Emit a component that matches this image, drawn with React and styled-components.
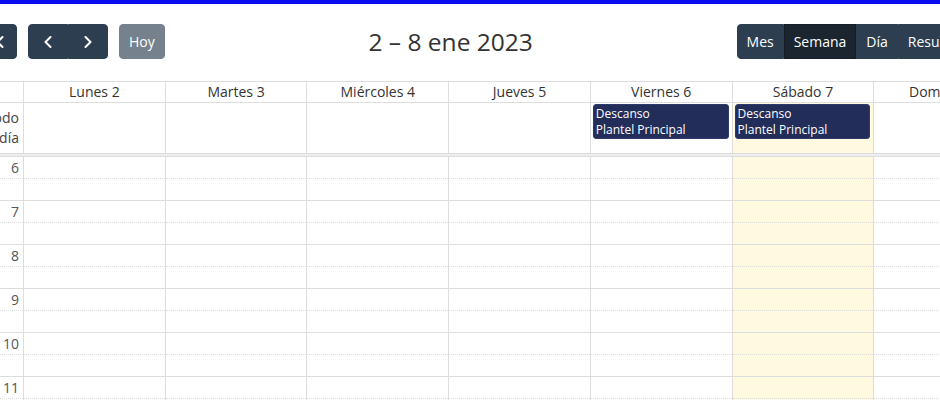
import React from "react";
import styled, { createGlobalStyle } from "styled-components";

const Global = createGlobalStyle`
  html, body { margin: 0; padding: 0; overflow: hidden; background: #fff; }
  body { font-family: "Open Sans", "Noto Sans", sans-serif; font-size: 14px; color: #333; }
`;

const TopBar = styled.div`
  height: 4px;
  background: #0a0af0;
`;

const Calendar = styled.div`
  width: 1038px;
  margin-left: -23px;
  padding-top: 20px;
`;

const Toolbar = styled.div`
  display: flex;
  justify-content: space-between;
  align-items: center;
  padding-right: 36px;
  margin-bottom: 22px;
`;

const Chunk = styled.div`
  display: flex;
  align-items: center;
  gap: 11px;
`;

const Group = styled.div`
  display: flex;
  & > button { border-radius: 0; }
  & > button:first-child { border-radius: 4px 0 0 4px; }
  & > button:last-child { border-radius: 0 4px 4px 0; }
`;

const Button = styled.button`
  font-family: inherit;
  font-size: 14px;
  line-height: 21px;
  height: 35px;
  padding: 6px 9px;
  border: 1px solid ${(p) => (p.$active ? "#151e27" : "#2c3e50")};
  background: ${(p) => (p.$active ? "#1a252f" : "#2c3e50")};
  color: #fff;
  border-radius: 4px;
  opacity: ${(p) => (p.disabled ? 0.65 : 1)};
  display: flex;
  align-items: center;
  justify-content: center;
  ${(p) => (p.$icon ? "width: 40px; padding: 0;" : "")}
  cursor: pointer;
`;

const Title = styled.h2`
  margin: 0;
  font-size: 24.5px;
  font-weight: 400;
  color: #333;
  line-height: 1.3;
`;

const Grid = styled.div`
  display: grid;
  grid-template-columns: 46px repeat(7, 1fr);
  border-top: 1px solid #ddd;
`;

const HeadCell = styled.div`
  height: 20px;
  line-height: 20px;
  text-align: center;
  border-left: ${(p) => (p.$first ? "none" : "1px solid #ddd")};
  border-bottom: 1px solid #ddd;
  color: #333;
  white-space: nowrap;
  overflow: hidden;
`;

const AllDayAxis = styled.div`
  min-height: 50px;
  display: flex;
  align-items: center;
  justify-content: flex-end;
  text-align: right;
  padding: 0 4px;
  line-height: 20px;
  color: #444;
  white-space: nowrap;
`;

const AllDayCell = styled.div`
  min-height: 50px;
  padding-top: 1px;
  border-left: 1px solid #ddd;
  background: ${(p) => (p.$today ? "rgba(255, 220, 40, 0.15)" : "transparent")};
  box-sizing: border-box;
`;

const Event = styled.div`
  margin: 0 3px 0 2px;
  background: #222d5a;
  border: 1px solid #2e3a6a;
  border-radius: 3px;
  color: #fff;
  font-size: 12px;
  line-height: 16px;
  padding: 1px 2px 0;
  white-space: nowrap;
  overflow: hidden;
`;

const Divider = styled.div`
  grid-column: 1 / -1;
  height: 2px;
  border-top: 1px solid #ddd;
  border-bottom: 1px solid #ddd;
  background: #eeeeee;
`;

const Column = styled.div`
  border-left: ${(p) => (p.$axis ? "none" : "1px solid #ddd")};
  background: ${(p) => (p.$today ? "rgba(255, 220, 40, 0.15)" : "transparent")};
`;

const Slot = styled.div`
  height: 21px;
  border-bottom: 1px ${(p) => (p.$minor ? "dotted" : "solid")} #ddd;
  text-align: right;
  padding: 0 4px;
  line-height: 21px;
  color: #555;
`;

const Chevron = ({ dir = "left", double = false }) => {
  const single = dir === "left" ? "M6 1 L1 6 L6 11" : "M1 1 L6 6 L1 11";
  return (
    <svg width={double ? 14 : 8} height="12" viewBox={double ? "0 0 14 12" : "0 0 8 12"} fill="none">
      <path d={single} stroke="#fff" strokeWidth="2" strokeLinecap="round" strokeLinejoin="round" transform="translate(0.5 0)" />
      {double && (
        <path d={single} stroke="#fff" strokeWidth="2" strokeLinecap="round" strokeLinejoin="round" transform="translate(6.5 0)" />
      )}
    </svg>
  );
};

const days = [
  { label: "Lunes 2" },
  { label: "Martes 3" },
  { label: "Miércoles 4" },
  { label: "Jueves 5" },
  { label: "Viernes 6", events: ["Descanso", "Plantel Principal"] },
  { label: "Sábado 7", events: ["Descanso", "Plantel Principal"], today: true },
  { label: "Domingo 8" },
];

const hours = [6, 7, 8, 9, 10, 11, 12, 13];

const Slots = ({ labels }) =>
  hours.map((h) => (
    <React.Fragment key={h}>
      <Slot $minor>{labels ? h : ""}</Slot>
      <Slot />
    </React.Fragment>
  ));

export default function App() {
  return (
    <>
      <Global />
      <TopBar />
      <Calendar>
        <Toolbar>
          <Chunk>
            <Button $icon aria-label="prev year">
              <Chevron double />
            </Button>
            <Group>
              <Button $icon aria-label="prev">
                <Chevron />
              </Button>
              <Button $icon aria-label="next">
                <Chevron dir="right" />
              </Button>
            </Group>
            <Button disabled>Hoy</Button>
          </Chunk>
          <Title>2 – 8 ene 2023</Title>
          <Chunk>
            <Group>
              <Button>Mes</Button>
              <Button $active>Semana</Button>
              <Button>Día</Button>
              <Button>Resumen</Button>
            </Group>
          </Chunk>
        </Toolbar>
        <Grid>
          <HeadCell $first />
          {days.map((d) => (
            <HeadCell key={d.label}>{d.label}</HeadCell>
          ))}
          <AllDayAxis>
            Todo
            <br />
            el día
          </AllDayAxis>
          {days.map((d) => (
            <AllDayCell key={d.label} $today={d.today}>
              {d.events && (
                <Event>
                  {d.events.map((t) => (
                    <div key={t}>{t}</div>
                  ))}
                </Event>
              )}
            </AllDayCell>
          ))}
          <Divider />
          <Column $axis>
            <Slots labels />
          </Column>
          {days.map((d) => (
            <Column key={d.label} $today={d.today}>
              <Slots />
            </Column>
          ))}
        </Grid>
      </Calendar>
    </>
  );
}
